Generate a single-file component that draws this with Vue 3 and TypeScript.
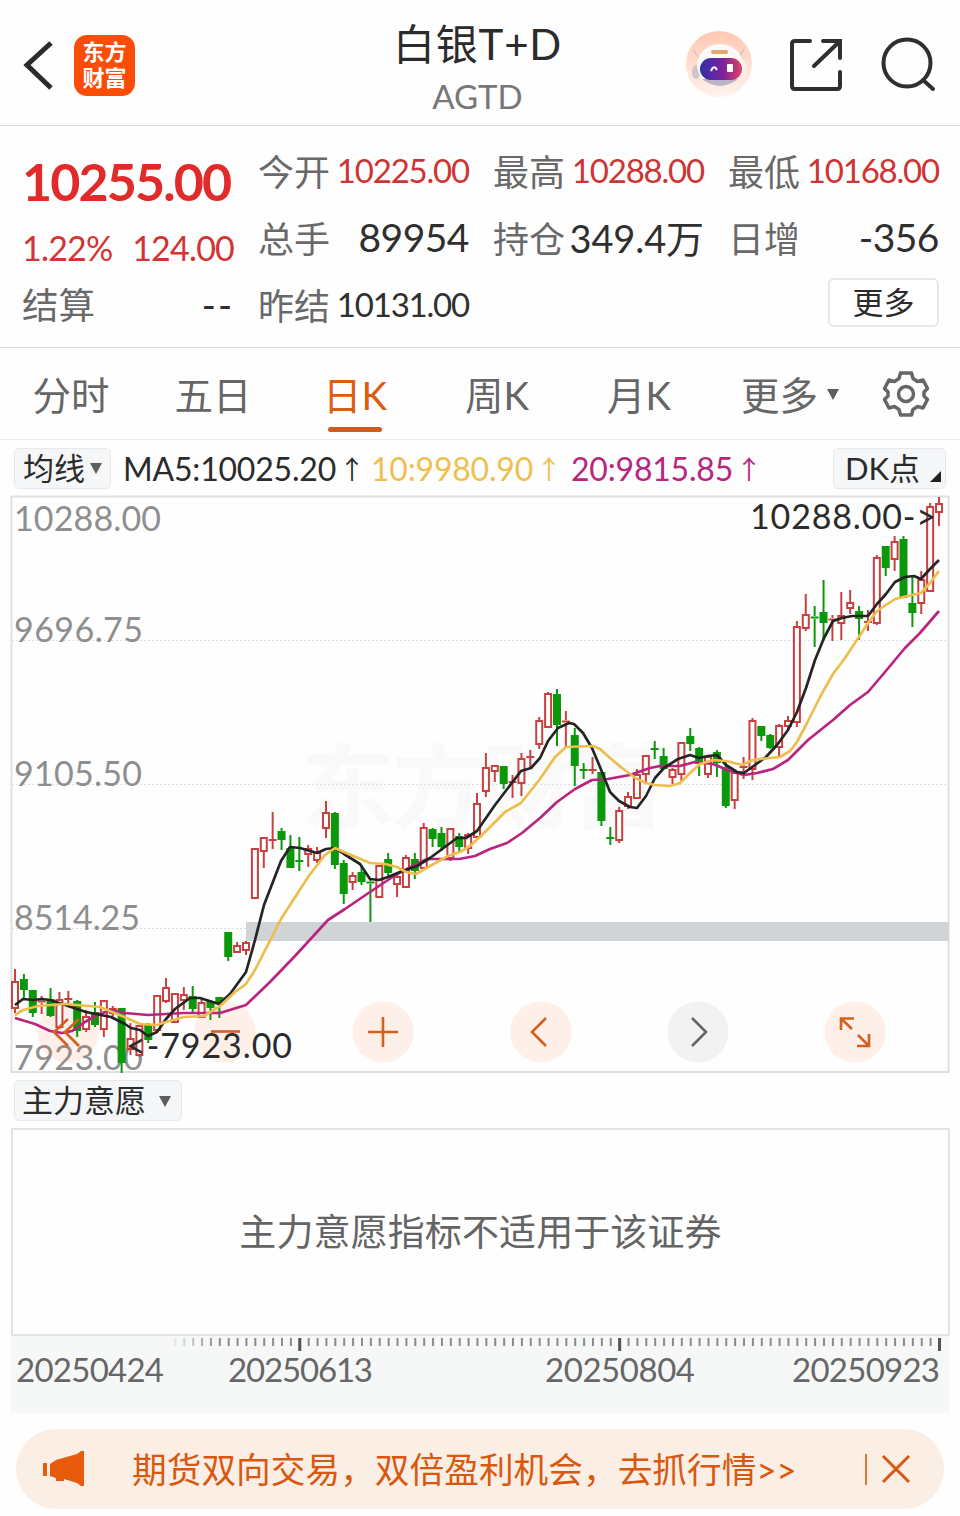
<script setup lang="ts">
import { computed, ref } from "vue";

// ローソク足: [方向, 高値, 実体上端, 実体下端, 安値](画面座標)
type Candle = ["r" | "g", number, number, number, number];

interface Tab {
  key: string;
  label: string;
}

const tabs: Tab[] = [
  { key: "min", label: "分时" },
  { key: "5d", label: "五日" },
  { key: "day", label: "日K" },
  { key: "week", label: "周K" },
  { key: "month", label: "月K" }
];
const activeTab = ref("day");
const showBanner = ref(true);

const stats = [
  { label: "今开", value: "10225.00", type: "up" },
  { label: "最高", value: "10288.00", type: "up" },
  { label: "最低", value: "10168.00", type: "up" },
  { label: "总手", value: "89954", type: "big" },
  { label: "持仓", value: "349.4万", type: "big wan" },
  { label: "日增", value: "-356", type: "big" },
  { label: "昨结", value: "10131.00", type: "plain" }
];

const candles: Candle[] = [
  ["r", 969, 982, 1008, 1013],
  ["g", 974, 980, 989, 1000],
  ["g", 990, 991, 1012, 1017],
  ["r", 996, 1000, 1003, 1014],
  ["g", 988, 1000, 1015, 1017],
  ["r", 992, 1000, 1027, 1029],
  ["r", 991, 998, 1000, 1004],
  ["g", 1000, 1002, 1030, 1037],
  ["r", 1010, 1017, 1029, 1032],
  ["g", 1002, 1013, 1024, 1027],
  ["r", 1000, 1001, 1029, 1037],
  ["r", 1006, 1009, 1013, 1017],
  ["g", 1008, 1009, 1062, 1073],
  ["r", 1023, 1039, 1049, 1055],
  ["r", 1025, 1026, 1055, 1057],
  ["g", 1023, 1025, 1039, 1043],
  ["r", 995, 996, 1030, 1031],
  ["r", 978, 988, 1001, 1003],
  ["r", 993, 994, 1022, 1023],
  ["r", 987, 995, 1000, 1010],
  ["g", 986, 997, 1008, 1012],
  ["r", 998, 1003, 1017, 1018],
  ["g", 1000, 1002, 1007, 1020],
  ["g", 998, 998, 1003, 1018],
  ["g", 932, 933, 956, 961],
  ["r", 942, 946, 952, 953],
  ["r", 941, 943, 950, 955],
  ["r", 848, 849, 898, 899],
  ["r", 837, 838, 851, 868],
  ["r", 812, 839, 841, 849],
  ["g", 828, 832, 839, 850],
  ["g", 835, 849, 867, 867],
  ["g", 837, 860, 862, 871],
  ["r", 845, 849, 854, 867],
  ["r", 847, 853, 860, 863],
  ["r", 801, 813, 828, 838],
  ["g", 812, 814, 864, 869],
  ["g", 860, 864, 893, 904],
  ["r", 872, 876, 882, 890],
  ["g", 865, 873, 881, 885],
  ["g", 879, 881, 884, 922],
  ["r", 865, 866, 897, 898],
  ["g", 853, 860, 872, 877],
  ["r", 875, 877, 884, 897],
  ["r", 855, 858, 887, 887],
  ["g", 853, 860, 870, 879],
  ["r", 823, 828, 868, 868],
  ["g", 828, 830, 838, 847],
  ["g", 827, 834, 846, 851],
  ["r", 828, 829, 858, 861],
  ["g", 833, 837, 846, 853],
  ["r", 833, 835, 848, 854],
  ["r", 793, 804, 837, 837],
  ["r", 753, 768, 791, 797],
  ["r", 765, 766, 771, 782],
  ["g", 766, 767, 783, 789],
  ["r", 775, 781, 783, 798],
  ["r", 753, 759, 783, 796],
  ["r", 750, 756, 758, 768],
  ["r", 717, 721, 744, 749],
  ["r", 692, 694, 727, 727],
  ["g", 689, 695, 724, 746],
  ["r", 711, 720, 723, 747],
  ["g", 728, 736, 765, 786],
  ["g", 763, 769, 771, 779],
  ["r", 757, 769, 771, 774],
  ["g", 773, 773, 820, 826],
  ["g", 827, 837, 839, 845],
  ["r", 807, 811, 840, 843],
  ["r", 792, 797, 806, 809],
  ["r", 769, 775, 798, 798],
  ["r", 755, 756, 774, 782],
  ["g", 741, 748, 750, 759],
  ["g", 748, 757, 768, 768],
  ["r", 768, 770, 777, 784],
  ["r", 742, 743, 774, 781],
  ["g", 728, 737, 743, 751],
  ["g", 747, 749, 763, 776],
  ["r", 755, 757, 774, 778],
  ["g", 750, 753, 762, 777],
  ["g", 760, 768, 805, 808],
  ["r", 772, 773, 800, 809],
  ["r", 757, 766, 768, 779],
  ["r", 718, 721, 769, 780],
  ["g", 726, 727, 735, 741],
  ["g", 734, 736, 747, 749],
  ["r", 724, 726, 747, 756],
  ["r", 716, 721, 726, 730],
  ["r", 621, 627, 722, 727],
  ["r", 594, 615, 628, 631],
  ["g", 606, 616, 619, 647],
  ["g", 580, 613, 622, 640],
  ["r", 615, 618, 621, 641],
  ["r", 592, 616, 623, 640],
  ["r", 590, 603, 608, 614],
  ["g", 606, 612, 618, 640],
  ["r", 610, 621, 623, 631],
  ["r", 555, 558, 623, 625],
  ["g", 547, 547, 567, 576],
  ["r", 536, 542, 559, 571],
  ["g", 536, 540, 597, 597],
  ["g", 577, 604, 612, 627],
  ["r", 571, 580, 603, 614],
  ["r", 503, 507, 591, 591],
  ["r", 497, 504, 512, 526]
];

// 足の間隔
const step = 8.885;

const bars = computed(() =>
  candles.map(([dir, high, top, bottom, low], i) => {
    const x = 15 + i * step;
    const thin = bottom - top < 4;
    return { dir, x, high, low, top, bottom, height: Math.max(bottom - top, 1), thin };
  })
);

// 移動平均線
const lines = [
  {
    name: "ma20",
    points:
      "15,1018 35,1024 50,1031 62,1033 72,1031 85,1022 97,1015 111,1010 125,1013 148,1015 184,1013 220,1013 246,1005 270,982 295,956 328,920 345,909 370,892 397,874 415,865 427,859 459,859 475,856 490,849 507,843 522,833 540,818 557,802 575,789 592,780 608,779 630,775 650,768 660,766 680,766 695,762 713,764 730,771 744,775 757,773 773,769 788,760 808,740 833,720 850,705 868,692 885,672 905,648 920,633 939,611"
  },
  {
    name: "ma5",
    points:
      "15,1005 23,999 33,1000 42,999 50,1000 65,1005 86,1012 111,1017 125,1024 131,1028 140,1030 148,1036 157,1032 166,1019 175,1009 190,998 200,998 219,1004 230,994 246,972 255,940 264,905 281,861 290,847 300,848 317,853 326,849 335,848 344,854 360,864 370,879 379,880 388,877 400,872 417,866 430,858 457,838 466,838 477,831 495,805 521,771 531,768 540,758 548,741 558,728 569,723 574,724 583,733 592,748 600,767 610,792 619,801 630,807 637,808 646,796 655,778 664,768 678,759 690,755 699,758 708,756 717,755 726,765 737,772 744,773 755,765 766,757 777,745 788,730 797,712 806,688 815,660 824,638 833,621 842,618 852,616 868,616 877,604 886,594 895,582 905,577 914,576 921,579 930,569 939,560"
  },
  {
    name: "ma10",
    points:
      "15,1015 23,1010 38,1006 65,1004 77,1005 100,1007 122,1016 140,1024 157,1025 166,1022 184,1017 204,1016 220,1006 235,992 246,984 255,970 281,919 308,877 325,855 335,848 344,852 370,863 385,864 397,867 406,872 416,874 430,866 448,856 460,852 470,846 482,835 505,812 521,803 540,779 555,757 566,747 593,746 600,749 610,758 622,768 637,779 646,783 655,785 670,786 680,783 690,773 700,764 713,760 726,761 742,765 753,760 770,758 780,757 790,751 797,742 806,725 820,697 833,674 845,658 868,623 877,611 895,599 912,595 921,593 930,583 939,571"
  }
];

const priceLabels = [
  { text: "10288.00", y: 531, width: 147 },
  { text: "9696.75", y: 642, width: 129 },
  { text: "9105.50", y: 786, width: 128 },
  { text: "8514.25", y: 930, width: 126 },
  { text: "7923.00", y: 1070, width: 129 }
];

// チャート操作ボタン
const tools = [
  { x: 68, d: "M68 1019L54 1032L68 1046M79 1019L65 1032L79 1046" },
  { x: 225, d: "M211 1031.5H240" },
  { x: 383, d: "M368 1032H398M383 1017V1047" },
  { x: 541, d: "M546 1018L532 1032L546 1046" },
  { x: 698, d: "M692 1018L706 1032L692 1046", off: true },
  {
    x: 855,
    d: "M841 1030V1018.500H854M842 1019.500L852 1029M869 1034V1046H857M868 1045L858 1035"
  }
];

// 時間軸の目盛り
const ticks = computed(() => {
  const list: { x: number; major: boolean; opacity: number }[] = [];
  for (let i = 0; i < 87; i++) {
    const x = 939.5 - i * step;
    list.push({
      x,
      major: i === 0 || i === 36 || i === 72,
      opacity: Math.min(1, (x - 168) / 50)
    });
  }
  return list;
});

const dates = [
  { text: "20250424", x: 16, width: 148 },
  { text: "20250613", x: 228, width: 145 },
  { text: "20250804", x: 545, width: 150 },
  { text: "20250923", x: 792, width: 148 }
];
</script>

<template>
  <div class="page">
    <header class="header">
      <div class="side">
        <svg class="back" width="36" height="54" viewBox="0 0 36 54">
          <path d="M31 5L7 27L31 50" />
        </svg>
        <div class="logo"><span>东方</span><span>财富</span></div>
      </div>
      <div class="title">
        <h1>白银T+D</h1>
        <p>AGTD</p>
      </div>
      <div class="side right">
        <svg width="66" height="66" viewBox="0 0 66 66">
          <defs>
            <linearGradient id="halo" x1="0" y1="0" x2="0" y2="1">
              <stop offset="0" stop-color="#ffc9b2" />
              <stop offset="1" stop-color="#fff3ec" />
            </linearGradient>
            <linearGradient id="visor" x1="0" y1="0" x2="1" y2="0">
              <stop offset="0" stop-color="#3030a8" />
              <stop offset="0.55" stop-color="#7d229c" />
              <stop offset="1" stop-color="#e04460" />
            </linearGradient>
          </defs>
          <circle cx="33" cy="33" r="33" fill="url(#halo)" />
          <ellipse cx="10" cy="41" rx="4" ry="7" fill="#cfc5cc" />
          <ellipse cx="57" cy="38" rx="4" ry="9" fill="#f6eeee" />
          <path d="M7 19L13 27M58 18L54 25" stroke="#dcc7c4" stroke-width="2" />
          <ellipse cx="34" cy="34" rx="23" ry="21" fill="#fbf9fa" />
          <path d="M16 48Q34 62 52 48Z" fill="#b9b4c8" />
          <rect x="25" y="19" width="17" height="4" rx="2" fill="#e3a572" />
          <rect x="14" y="27" width="42" height="22" rx="11" fill="url(#visor)" />
          <path d="M25 40Q28 33 31 39" fill="none" stroke="#fff" stroke-width="2" />
          <rect x="41" y="33" width="6" height="8" rx="1" fill="#fff" />
        </svg>
        <svg class="stroke" width="54" height="54" viewBox="0 0 54 54">
          <path d="M21 4H6Q3 4 3 7V49Q3 52 6 52H48Q51 52 51 49V35" />
          <path d="M34 4H51V21M50 5L25 29" />
        </svg>
        <svg class="stroke" width="56" height="56" viewBox="0 0 56 56">
          <circle cx="27" cy="27" r="23.500" />
          <path d="M43 44L53 53" />
        </svg>
      </div>
    </header>

    <section class="quote">
      <div class="main-price">
        <div class="price">10255.00</div>
        <div class="change"><span>1.22%</span><span class="diff">124.00</span></div>
        <div class="stat"><label>结算</label><span class="value plain dash">--</span></div>
      </div>
      <div class="stats">
        <div v-for="s in stats" :key="s.label" class="stat">
          <label>{{ s.label }}</label>
          <span class="value" :class="s.type">{{ s.value }}</span>
        </div>
        <div class="more-cell"><button class="more">更多</button></div>
      </div>
    </section>

    <nav class="tabs">
      <div
        v-for="t in tabs"
        :key="t.key"
        class="tab"
        :class="{ active: t.key === activeTab }"
        @click="activeTab = t.key"
      >
        {{ t.label }}
      </div>
      <div class="tab more-tab">更多<i class="caret"></i></div>
      <svg class="gear" width="48" height="48" viewBox="0 0 48 48">
        <path
          d="M18.500 3H29.500L31 8.500L35.500 11.500L41 10L45.500 18.500L42 22V26L45.500 29.500L41 38L35.500 36.500L31 39.500L29.500 45H18.500L17 39.500L12.500 36.500L7 38L2.500 29.500L6 26V22L2.500 18.500L7 10L12.500 11.500L17 8.500Z"
        />
        <circle cx="24" cy="24" r="7.500" />
      </svg>
    </nav>

    <section class="indicator">
      <div class="chip">均线<i class="caret"></i></div>
      <div class="ma black">MA5:10025.20<b>↑</b></div>
      <div class="ma yellow">10:9980.90<b>↑</b></div>
      <div class="ma pink">20:9815.85<b>↑</b></div>
      <div class="chip dk">DK点<i class="corner"></i></div>
    </section>

    <svg class="chart" width="940" height="580" viewBox="10 495 940 580">
      <text class="watermark" x="302" y="821" textLength="362">东方财富</text>
      <path class="grid" d="M12 640.500H948M12 784.500H948M12 928.500H948" />
      <rect class="frame" x="11.500" y="496.500" width="937" height="575.500" />
      <rect x="246" y="922" width="703" height="19" fill="#d0d4d7" />
      <text
        v-for="p in priceLabels"
        :key="p.text"
        class="axis"
        x="14"
        :y="p.y"
        :textLength="p.width"
      >
        {{ p.text }}
      </text>
      <circle
        v-for="t in tools"
        :key="'c' + t.x"
        :cx="t.x"
        cy="1032"
        r="30.500"
        :fill="t.off ? '#f2f2f2' : 'rgba(255, 112, 40, 0.1)'"
      />
      <g v-for="(b, i) in bars" :key="i" :class="b.dir === 'r' ? 'up' : 'down'">
        <path v-if="b.high < b.top" :d="`M${b.x} ${b.high}V${b.top}`" />
        <path v-if="b.low > b.bottom" :d="`M${b.x} ${b.bottom}V${b.low}`" />
        <path v-if="b.thin" :d="`M${b.x - 4} ${(b.top + b.bottom) / 2}h8`" />
        <rect v-else :x="b.x - 3" :y="b.top" width="6" :height="b.height" />
      </g>
      <polyline v-for="l in lines" :key="l.name" :class="l.name" :points="l.points" />
      <path
        v-for="t in tools"
        :key="'i' + t.x"
        class="tool"
        :class="{ off: t.off }"
        :d="t.d"
      />
      <text class="mark" x="126" y="1058" textLength="166">&lt;-7923.00</text>
      <text class="mark" x="750" y="529" textLength="186">10288.00-&gt;</text>
    </svg>

    <div class="sub-bar">
      <div class="chip sub">主力意愿<i class="caret"></i></div>
    </div>
    <section class="empty">主力意愿指标不适用于该证券</section>

    <svg class="timeline" width="938" height="77" viewBox="11 1336 938 77">
      <path
        v-for="(t, i) in ticks"
        :key="i"
        :class="{ major: t.major }"
        :d="`M${t.x} 1338V${t.major ? 1351 : 1346}`"
        :opacity="t.opacity"
      />
      <text v-for="d in dates" :key="d.text" :x="d.x" y="1382" :textLength="d.width">
        {{ d.text }}
      </text>
    </svg>

    <footer v-if="showBanner" class="banner">
      <svg width="42" height="36" viewBox="0 0 42 36">
        <path d="M0 12H4V25H0ZM7 13L13 9L34 3L38 0H41V35H38L34 32L21 28V30H13V27L7 25Z" />
      </svg>
      <p>期货双向交易，双倍盈利机会，去抓行情&gt;&gt;</p>
      <i class="split"></i>
      <svg class="close" width="30" height="30" viewBox="0 0 30 30" @click="showBanner = false">
        <path d="M2 2L28 28M28 2L2 28" />
      </svg>
    </footer>
  </div>
</template>

<style>
body {
  margin: 0;
  background: #fefefe;
}
</style>

<style scoped>
.page {
  width: 960px;
  height: 1516px;
  overflow: hidden;
  background: #fefefe;
  color: #2b2b2b;
  font-family: Lato, "Noto Sans CJK SC", sans-serif;
}

.header {
  display: grid;
  grid-template-columns: 1fr 200px 1fr;
  box-sizing: border-box;
  height: 126px;
  padding: 0 25px 0 20px;
  border-bottom: 1px solid #d8d8d8;
}

.side {
  display: flex;
  align-items: center;
  gap: 18px;
  padding-top: 5px;
}

.right {
  justify-content: flex-end;
  gap: 38px;
  padding-top: 3px;
}

.back path {
  fill: none;
  stroke: #2b2b2b;
  stroke-width: 5;
}

.right svg {
  margin-right: -1px;
}

.stroke {
  fill: none;
  stroke: #2f2f2f;
  stroke-width: 4;
  stroke-linecap: round;
}

.logo {
  display: flex;
  flex-direction: column;
  align-items: center;
  justify-content: center;
  width: 61px;
  height: 61px;
  border-radius: 13px;
  background: #fb4d08;
  color: #fff;
  font-size: 22px;
  font-weight: 700;
  line-height: 26px;
}

.title {
  text-align: center;
}

.title h1 {
  margin: 16px 0 0;
  font-size: 42px;
  font-weight: 400;
  letter-spacing: 0.8px;
  line-height: 56px;
  white-space: nowrap;
}

.title p {
  margin: 0;
  color: #777;
  font-size: 33px;
  line-height: 48px;
}

.quote {
  display: flex;
  gap: 24px;
  box-sizing: border-box;
  height: 222px;
  padding: 10px 21px 0 22px;
  border-bottom: 1px solid #d8d8d8;
}

.main-price {
  width: 212px;
}

.price {
  height: 78px;
  color: #e12b2b;
  font-size: 52px;
  font-weight: 700;
  letter-spacing: -1.9px;
  line-height: 90px;
  white-space: nowrap;
}

.change {
  display: flex;
  justify-content: space-between;
  height: 56px;
  color: #d23434;
  font-size: 34px;
  letter-spacing: -0.8px;
  line-height: 68px;
}

.stats {
  display: grid;
  flex: 1;
  grid-template-columns: repeat(3, 1fr);
  grid-auto-rows: 67px;
  column-gap: 24px;
}

.stat {
  display: flex;
  align-items: center;
  justify-content: space-between;
  height: 67px;
  white-space: nowrap;
}

.stat label {
  color: #696969;
  font-size: 36px;
}

.value {
  color: #2f2f2f;
  font-size: 33px;
  letter-spacing: -1.2px;
}

.value.up {
  color: #cd3535;
}

.value.big {
  font-size: 39px;
  letter-spacing: -0.5px;
}

.value.wan {
  font-size: 38px;
  letter-spacing: -0.1px;
}

.main-price label {
  font-size: 36.5px;
}

.value.dash {
  font-size: 38px;
  letter-spacing: 2px;
}

.more-cell {
  display: flex;
  grid-column: 3;
  justify-content: flex-end;
  align-items: center;
}

.more {
  width: 111px;
  height: 49px;
  margin-bottom: 2px;
  padding: 0;
  border: 2px solid #e8e8e8;
  border-radius: 6px;
  background: #fff;
  color: #2b2b2b;
  font: inherit;
  font-size: 31px;
  line-height: 41px;
}

.tabs {
  display: grid;
  grid-template-columns: repeat(5, 142px) 172px 48px;
  align-items: center;
  box-sizing: border-box;
  height: 92px;
  border-bottom: 1px solid #ececec;
}

.tab {
  position: relative;
  height: 91px;
  color: #666;
  font-size: 38.5px;
  line-height: 94px;
  text-align: center;
  white-space: nowrap;
}

.tab.active {
  color: #dc5c12;
}

.tab.active::after {
  position: absolute;
  bottom: 7px;
  left: 44px;
  width: 54px;
  height: 5px;
  border-radius: 3px;
  background: #cf5c1c;
  content: "";
}

.caret {
  display: inline-block;
  border: 6.5px solid transparent;
  border-top: 11px solid #5e5e5e;
  border-bottom: 0;
  vertical-align: middle;
}

.more-tab {
  padding-left: 31px;
  text-align: left;
}

.more-tab .caret {
  margin: -12px 0 0 9px;
}

.gear {
  fill: none;
  stroke: #666;
  stroke-width: 3.5;
  stroke-linejoin: round;
}

.indicator {
  display: flex;
  align-items: center;
  box-sizing: border-box;
  height: 55px;
  padding: 1px 14px 0;
  font-size: 32px;
  white-space: nowrap;
}

.chip {
  box-sizing: border-box;
  width: 97px;
  height: 41px;
  padding-left: 8px;
  border: 1px solid #e6e8ea;
  border-radius: 5px;
  background: #f5f6f8;
  font-size: 31px;
  line-height: 38px;
  white-space: nowrap;
}

.chip .caret {
  margin: -6px 0 0 5px;
}

.ma {
  height: 40px;
  letter-spacing: -0.2px;
  line-height: 42px;
}

.ma b {
  display: inline-block;
  width: 18px;
  margin-left: 7px;
  font-family: "Noto Sans CJK SC", sans-serif;
  font-size: 26px;
  font-weight: 400;
  line-height: 30px;
  text-indent: -4px;
  vertical-align: 2px;
}

.black {
  width: 248px;
  margin-left: 12px;
}

.yellow {
  width: 200px;
  color: #eec050;
}

.pink {
  color: #b8267f;
}

.dk {
  position: relative;
  width: 113px;
  margin-left: auto;
  padding-left: 11px;
}

.corner {
  position: absolute;
  right: 4px;
  bottom: 6px;
  border-bottom: 11px solid #222;
  border-left: 11px solid transparent;
}

.chart {
  display: block;
  margin-left: 10px;
  overflow: visible;
}

.chart text,
.timeline text {
  font-size: 34px;
}

.chart .watermark {
  fill: #f9f9f9;
  font-size: 92px;
  font-weight: 700;
}

.frame,
.grid {
  fill: none;
  stroke: #e0e0e0;
  stroke-width: 2;
}

.grid {
  stroke-width: 1;
  stroke-dasharray: 2 2;
}

.chart .axis {
  fill: #8e8e8e;
}

.mark {
  fill: #2b2b2b;
}

.up {
  fill: #fff;
  stroke: #c84040;
  stroke-width: 2;
}

.down {
  fill: #0b980b;
  stroke: #0b980b;
  stroke-width: 2;
}

polyline {
  fill: none;
  stroke-width: 2.7;
  stroke-linejoin: round;
}

.ma5 {
  stroke: #242424;
}

.ma10 {
  stroke: #edbd4d;
}

.ma20 {
  stroke: #b9247f;
}

.tool {
  fill: none;
  stroke: #d65f1d;
  stroke-width: 2.6;
}

.tool.off {
  stroke: #666;
}

.sub-bar {
  box-sizing: border-box;
  height: 53px;
  padding: 5px 14px 0;
}

.chip.sub {
  width: 168px;
  padding-left: 7px;
}

.sub .caret {
  margin-left: 13px;
}

.empty {
  box-sizing: border-box;
  width: 939px;
  height: 208px;
  margin-left: 11px;
  border: 2px solid #e3e3e3;
  color: #646464;
  font-size: 37px;
  letter-spacing: 0.1px;
  line-height: 204px;
  text-align: center;
}

.timeline {
  display: block;
  margin-left: 11px;
  background: #f6f7f7;
}

.timeline path {
  stroke: #8a8a8a;
  stroke-width: 2;
}

.timeline .major {
  stroke: #555;
  stroke-width: 3;
}

.timeline text {
  fill: #666;
  font-size: 33px;
}

.banner {
  display: flex;
  align-items: center;
  box-sizing: border-box;
  width: 928px;
  height: 80px;
  margin: 16px 0 0 16px;
  padding: 0 33px 0 27px;
  border-radius: 40px;
  background: #fbeee4;
  fill: #e85a0c;
}

.banner p {
  margin: 0 0 2px 47px;
  color: #d9580f;
  font-size: 34.7px;
  white-space: nowrap;
}

.split {
  width: 2px;
  height: 31px;
  margin-left: auto;
  background: #dd7a42;
}

.close {
  margin-left: 14px;
  stroke: #d9580f;
  stroke-width: 3;
}
</style>
